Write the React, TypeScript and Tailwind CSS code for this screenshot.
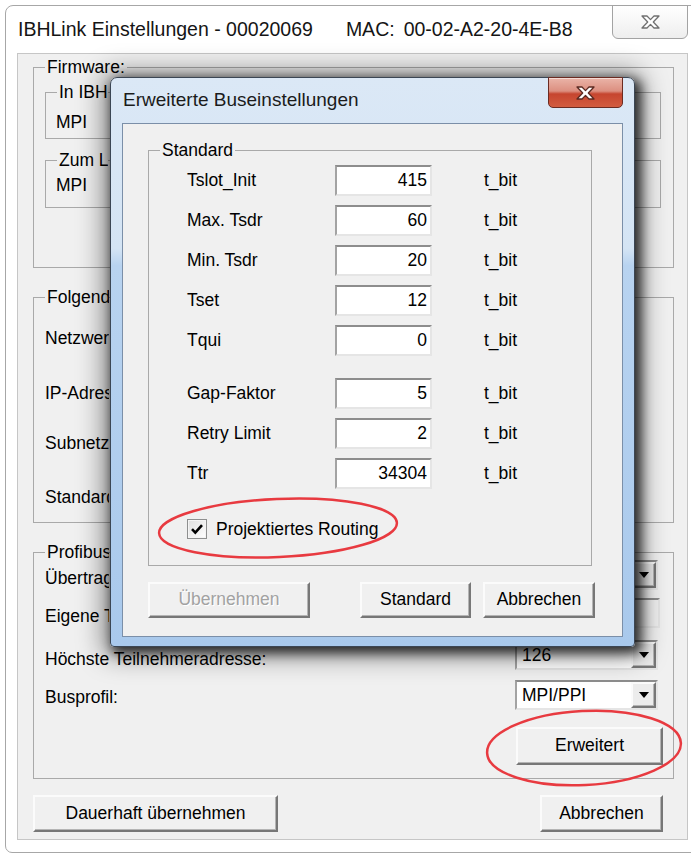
import clsx from "clsx"
import type { ReactNode } from "react"

// classic 3D edges
const sunken =
  "border-2 border-t-[#8d8d8d] border-l-[#a3a3a3] border-r-[#e5e5e5] border-b-[#e5e5e5]"
const raised =
  "border-2 border-t-[#fbfbfb] border-l-[#fbfbfb] border-r-[#777777] border-b-[#777777] shadow-[inset_-1px_-1px_0_#b4b4b4]"

const busParams = [
  { label: "Tslot_Init", value: "415" },
  { label: "Max. Tsdr", value: "60" },
  { label: "Min. Tsdr", value: "20" },
  { label: "Tset", value: "12" },
  { label: "Tqui", value: "0" },
  { label: "Gap-Faktor", value: "5", gap: true },
  { label: "Retry Limit", value: "2" },
  { label: "Ttr", value: "34304" },
]

function CloseGlyph({ fill, stroke }: { fill: string; stroke: string }) {
  return (
    <svg width="19" height="14" viewBox="0 0 19 14">
      <polygon
        points="1,1 6,1 9.5,4.6 13,1 18,1 12.3,7 18,13 13,13 9.5,9.4 6,13 1,13 6.7,7"
        fill={fill}
        stroke={stroke}
        strokeWidth="1.3"
        strokeLinejoin="round"
      />
    </svg>
  )
}

function GroupBox({
  title,
  className,
  legendClassName,
  children,
}: {
  title: string
  className?: string
  legendClassName?: string
  children?: ReactNode
}) {
  return (
    <fieldset className={clsx("min-w-0 border border-[#a9a9a9]", className)}>
      <legend className={clsx("ml-[11px] whitespace-nowrap px-[2px] leading-[20px]", legendClassName)}>
        {title}
      </legend>
      {children}
    </fieldset>
  )
}

function Button({
  children,
  className,
  disabled,
}: {
  children: ReactNode
  className?: string
  disabled?: boolean
}) {
  return (
    <button
      type="button"
      className={clsx(
        "flex items-center justify-center bg-[#f0f0f0] leading-none",
        raised,
        disabled && "text-[#a2a2a2] [text-shadow:1px_1px_0_#ffffff]",
        className
      )}
    >
      {children}
    </button>
  )
}

function Combo({ value, className }: { value?: string; className?: string }) {
  return (
    <div className={clsx("flex h-[30px] w-[143px] bg-white", sunken, className)}>
      <span className="flex-1 truncate pl-[5px] leading-[26px]">{value}</span>
      <span className={clsx("flex w-[25px] items-center justify-center bg-[#ececec]", raised)}>
        <svg width="10" height="6" viewBox="0 0 10 6">
          <path d="M0 0h10L5 6z" fill="#000" />
        </svg>
      </span>
    </div>
  )
}

function BusDialog() {
  return (
    <div className="absolute left-[110px] top-[77px] flex h-[570px] w-[525px] flex-col rounded-t-[7px] rounded-b-[4px] border border-[#3b4654] bg-[linear-gradient(to_bottom,#dbe8f6_0%,#d4e4f4_30%,#b8d3f0_33%,#a9c9ec_100%)] px-[11px] pb-[9px] shadow-[4px_4px_12px_2px_rgba(0,0,0,0.75),0_2px_26px_8px_rgba(0,0,0,0.4)]">
      <div className="flex h-[45px] shrink-0">
        <span className="self-center pl-[1px] text-[19px] text-[#1b1b1b]">
          Erweiterte Buseinstellungen
        </span>
        <span className="-mt-[1px] ml-auto flex h-[31px] w-[75px] items-center justify-center rounded-b-[5px] border border-[#6b2b22] bg-[linear-gradient(to_bottom,#eab4a8_0%,#dc8f80_45%,#c6452f_55%,#d25c40_100%)] shadow-[inset_0_1px_0_rgba(255,255,255,0.5)]">
          <CloseGlyph fill="#ffffff" stroke="#5b2a22" />
        </span>
      </div>

      <div className="flex-1 border border-[#7b8fa8] bg-[#f0f0f0]">
        <GroupBox title="Standard" className="ml-[25px] mt-[16px] h-[426px] w-[444px]">
          <div className="pl-[38px]">
            {busParams.map((p) => (
              <div key={p.label} className={clsx("flex h-[40px] items-center", p.gap && "mt-[13px]")}>
                <span className="w-[148px]">{p.label}</span>
                <span
                  className={clsx(
                    "flex h-[31px] w-[97px] items-center justify-end bg-white pr-[3px]",
                    sunken
                  )}
                >
                  {p.value}
                </span>
                <span className="ml-[52px]">t_bit</span>
              </div>
            ))}
            <div className="mt-[16px] flex h-[40px] items-center">
              <span className="flex h-[20px] w-[20px] items-center justify-center border border-[#8e8f8f] bg-[linear-gradient(135deg,#dedede,#ffffff)] shadow-[inset_0_0_0_1px_#f4f4f4]">
                <svg width="16" height="16" viewBox="0 0 16 16">
                  <path d="M3 8.2L6.3 11.6L13 4.2" fill="none" stroke="#000" strokeWidth="2.6" />
                </svg>
              </span>
              <span className="ml-[9px]">Projektiertes Routing</span>
            </div>
          </div>
        </GroupBox>

        <div className="ml-[25px] mt-[16px] flex">
          <Button disabled className="h-[36px] w-[162px]">
            Übernehmen
          </Button>
          <Button className="ml-[50px] h-[36px] w-[111px]">Standard</Button>
          <Button className="ml-[12px] h-[36px] w-[112px]">Abbrechen</Button>
        </div>
      </div>
    </div>
  )
}

export default function App() {
  return (
    <div className="relative h-[856px] w-[691px] overflow-hidden bg-white font-['Liberation_Sans',Arial,sans-serif] text-[17.5px] text-black">
      {/* Hauptfenster */}
      <div className="ml-[5px] mt-[5px] flex h-[848px] w-[700px] flex-col rounded-tl-[8px] rounded-bl-[7px] border border-[#a7a7a7] bg-white">
        <div className="flex h-[47px] shrink-0">
          <span className="self-center whitespace-nowrap pl-[12px] text-[19.5px] text-[#151515]">
            IBHLink Einstellungen - 00020069
            <span className="ml-[33px]">MAC:</span>
            <span className="ml-[9px]">00-02-A2-20-4E-B8</span>
          </span>
          <span className="-mt-[1px] ml-auto mr-[16px] flex h-[34px] w-[76px] items-center justify-center rounded-b-[6px] border border-[#a3a3a3] bg-[linear-gradient(to_bottom,#ffffff,#eeeeee)]">
            <CloseGlyph fill="#ffffff" stroke="#707070" />
          </span>
        </div>

        <div className="ml-[11px] flex h-[787px] w-[671px] shrink-0 flex-col border border-[#c6c6c6] bg-[#f0f0f0] pl-[15px] pr-[13px] pt-[3px]">
          <GroupBox title="Firmware:" className="h-[211px]">
            <GroupBox
              title="In IBHLink"
              legendClassName="max-w-[51px] overflow-hidden"
              className="ml-[11px] mr-[12px] mt-[5px] h-[57px]"
            >
              <div className="pl-[10px] pt-[10px] leading-[20px]">MPI</div>
            </GroupBox>
            <GroupBox
              title="Zum Laden"
              legendClassName="max-w-[51px] overflow-hidden"
              className="ml-[11px] mr-[12px] mt-[11px] h-[58px]"
            >
              <div className="pl-[10px] pt-[5px] leading-[20px]">MPI</div>
            </GroupBox>
          </GroupBox>

          <GroupBox
            title="Folgende Einstellungen"
            legendClassName="max-w-[64px] overflow-hidden"
            className="mt-[19px] h-[236px]"
          >
            <div className="flex w-[75px] flex-col overflow-hidden whitespace-nowrap pl-[11px] leading-[20px]">
              <span className="mt-[21px]">Netzwerkname:</span>
              <span className="mt-[35px]">IP-Adresse:</span>
              <span className="mt-[30px]">Subnetzmaske:</span>
              <span className="mt-[34px]">Standardgateway:</span>
            </div>
          </GroupBox>

          <GroupBox title="Profibus" legendClassName="max-w-[64px] overflow-hidden" className="mt-[19px] h-[237px]">
            <div className="-mt-[2px] flex h-[30px] items-center justify-between pl-[11px] pr-[15px]">
              <span className="w-[64px] overflow-hidden whitespace-nowrap pt-[6px]">Übertragungsrate:</span>
              <Combo />
            </div>
            <div className="mt-[8px] flex h-[30px] items-center justify-between pl-[11px] pr-[13px]">
              <span className="w-[64px] overflow-hidden whitespace-nowrap pt-[7px]">Eigene Teilnehmeradresse:</span>
              <span className={clsx("h-[30px] w-[145px] bg-[#f0f0f0]", sunken)} />
            </div>
            <div className="mt-[12px] flex h-[30px] items-center justify-between pl-[11px] pr-[15px]">
              <span className="pt-[9px]">Höchste Teilnehmeradresse:</span>
              <Combo value="126" className="bg-[#f4f4f4]" />
            </div>
            <div className="mt-[10px] flex h-[30px] items-center justify-between pl-[11px] pr-[15px]">
              <span className="pt-[4px]">Busprofil:</span>
              <Combo value="MPI/PPI" />
            </div>
            <div className="mt-[17px] flex justify-end pr-[10px]">
              <Button className="h-[38px] w-[147px]">Erweitert</Button>
            </div>
          </GroupBox>

          <div className="mr-[11px] mt-[16px] flex justify-between">
            <Button className="h-[37px] w-[245px]">Dauerhaft übernehmen</Button>
            <Button className="h-[37px] w-[123px]">Abbrechen</Button>
          </div>
        </div>
      </div>

      <BusDialog />

      {/* rote Markierungen */}
      <svg className="pointer-events-none absolute left-0 top-0" width="691" height="856" viewBox="0 0 691 856">
        <ellipse
          cx="278"
          cy="528"
          rx="119"
          ry="29"
          transform="rotate(-2.5 278 528)"
          fill="none"
          stroke="#e83a40"
          strokeWidth="2.5"
        />
        <ellipse
          cx="584"
          cy="748"
          rx="97"
          ry="37"
          transform="rotate(-3 584 748)"
          fill="none"
          stroke="#e83a40"
          strokeWidth="2.5"
        />
      </svg>
    </div>
  )
}
